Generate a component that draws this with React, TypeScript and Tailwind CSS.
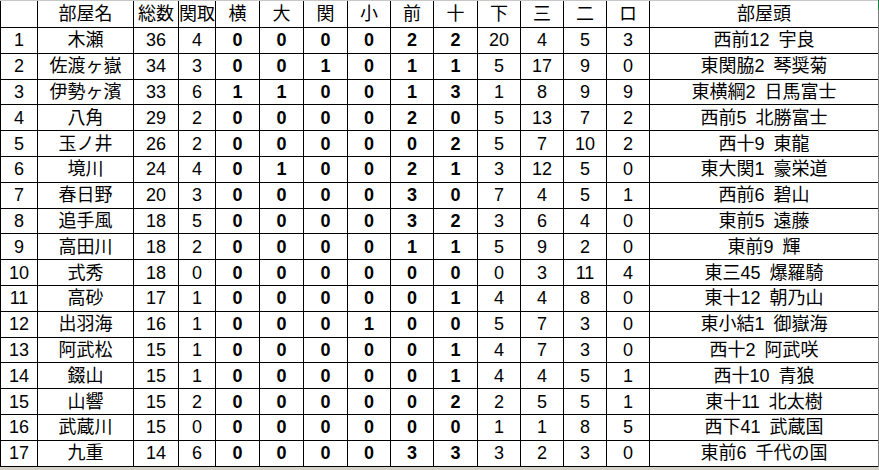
const headers = ['', '部屋名', '総数', '関取', '横', '大', '関', '小', '前', '十', '下', '三', '二', 'ロ', '部屋頭'];

const rows: (string | number)[][] = [
  [1, '木瀬', 36, 4, 0, 0, 0, 0, 2, 2, 20, 4, 5, 3, '西前12\u2002宇良'],
  [2, '佐渡ヶ嶽', 34, 3, 0, 0, 1, 0, 1, 1, 5, 17, 9, 0, '東関脇2\u2002琴奨菊'],
  [3, '伊勢ヶ濱', 33, 6, 1, 1, 0, 0, 1, 3, 1, 8, 9, 9, '東横綱2\u2002日馬富士'],
  [4, '八角', 29, 2, 0, 0, 0, 0, 2, 0, 5, 13, 7, 2, '西前5\u2002北勝富士'],
  [5, '玉ノ井', 26, 2, 0, 0, 0, 0, 0, 2, 5, 7, 10, 2, '西十9\u2002東龍'],
  [6, '境川', 24, 4, 0, 1, 0, 0, 2, 1, 3, 12, 5, 0, '東大関1\u2002豪栄道'],
  [7, '春日野', 20, 3, 0, 0, 0, 0, 3, 0, 7, 4, 5, 1, '西前6\u2002碧山'],
  [8, '追手風', 18, 5, 0, 0, 0, 0, 3, 2, 3, 6, 4, 0, '東前5\u2002遠藤'],
  [9, '高田川', 18, 2, 0, 0, 0, 0, 1, 1, 5, 9, 2, 0, '東前9\u2002輝'],
  [10, '式秀', 18, 0, 0, 0, 0, 0, 0, 0, 0, 3, 11, 4, '東三45\u2002爆羅騎'],
  [11, '高砂', 17, 1, 0, 0, 0, 0, 0, 1, 4, 4, 8, 0, '東十12\u2002朝乃山'],
  [12, '出羽海', 16, 1, 0, 0, 0, 1, 0, 0, 5, 7, 3, 0, '東小結1\u2002御嶽海'],
  [13, '阿武松', 15, 1, 0, 0, 0, 0, 0, 1, 4, 7, 3, 0, '西十2\u2002阿武咲'],
  [14, '錣山', 15, 1, 0, 0, 0, 0, 0, 1, 4, 4, 5, 1, '西十10\u2002青狼'],
  [15, '山響', 15, 2, 0, 0, 0, 0, 0, 2, 2, 5, 5, 1, '東十11\u2002北太樹'],
  [16, '武蔵川', 15, 0, 0, 0, 0, 0, 0, 0, 1, 1, 8, 5, '西下41\u2002武蔵国'],
  [17, '九重', 14, 6, 0, 0, 0, 0, 3, 3, 3, 2, 3, 0, '東前6\u2002千代の国'],
];

// columns 4..9 (横 through 十) are bold in the sheet
const isBold = (i: number) => i >= 4 && i <= 9;

export default function App() {
  return (
    <div
      className="w-[879px] h-[470px] bg-[#d4d0c8] overflow-hidden text-black"
      style={{ fontFamily: '"Liberation Sans", "Noto Sans CJK JP", sans-serif' }}
    >
      <div className="flex h-[467px]">
        <div className="w-[878px] bg-white border-t border-[#c8c8c8]">
          <div className="grid grid-cols-[37px_96px_45px_37px_44px_44px_44px_43px_43px_44px_43px_43px_43px_43px_229px] grid-rows-[27px] auto-rows-[25.8px] border-l border-black">
            {headers.map((h, i) => (
              <div key={i} className="border-r border-b border-black flex items-center justify-center text-[18px] leading-none">
                {h}
              </div>
            ))}
            {rows.map((row, r) =>
              row.map((v, i) => (
                <div
                  key={`${r}-${i}`}
                  className={`border-r border-b border-black flex items-center justify-center text-[18px] leading-none ${isBold(i) ? 'font-bold' : ''}`}
                >
                  {v}
                </div>
              ))
            )}
          </div>
        </div>
        <div className="w-[1px] bg-[#7f7f7f] relative">
          <div className="absolute top-0 left-0 w-[1px] h-[10px] bg-[#1e7e3e]" />
        </div>
      </div>
    </div>
  );
}
